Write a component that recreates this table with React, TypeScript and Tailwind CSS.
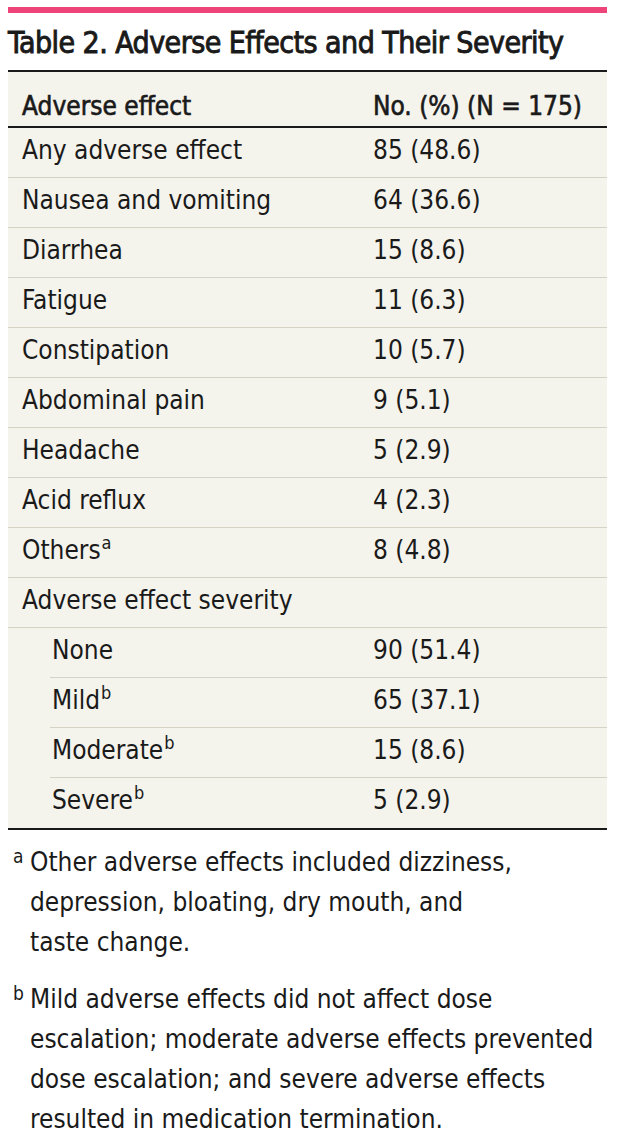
import React from "react";

const font = { fontFamily: '"DejaVu Sans Condensed", "DejaVu Sans", sans-serif' };

type Row = { label: string; sup?: string; value: string; indent?: boolean; noBorder?: boolean };

const rows: Row[] = [
  { label: "Any adverse effect", value: "85 (48.6)" },
  { label: "Nausea and vomiting", value: "64 (36.6)" },
  { label: "Diarrhea", value: "15 (8.6)" },
  { label: "Fatigue", value: "11 (6.3)" },
  { label: "Constipation", value: "10 (5.7)" },
  { label: "Abdominal pain", value: "9 (5.1)" },
  { label: "Headache", value: "5 (2.9)" },
  { label: "Acid reflux", value: "4 (2.3)" },
  { label: "Others", sup: "a", value: "8 (4.8)" },
  { label: "Adverse effect severity", value: "" },
  { label: "None", value: "90 (51.4)", indent: true },
  { label: "Mild", sup: "b", value: "65 (37.1)", indent: true },
  { label: "Moderate", sup: "b", value: "15 (8.6)", indent: true },
  { label: "Severe", sup: "b", value: "5 (2.9)", indent: true, noBorder: true },
];

export default function App() {
  return (
    <div className="w-[617px] min-h-[1142px] bg-white text-[#1a1a1a]" style={font}>
      <div className="pt-[7px] px-[8px] w-[607px]">
        <div className="h-[6px] w-[599px] bg-[#ef4479]" />
        <div className="h-[57px] pt-[12px] text-[30px] leading-[36px] whitespace-nowrap tracking-[-0.55px] [-webkit-text-stroke:0.9px_#1a1a1a]">
          Table 2. Adverse Effects and Their Severity
        </div>
        <div className="w-[599px] border-t-2 border-b-2 border-[#1a1a1a] bg-[#f4f3ec]">
          <div className="flex h-[56px] border-b-2 border-[#1a1a1a] pt-[19px] text-[26px] leading-[30px] [-webkit-text-stroke:0.6px_#1a1a1a]">
            <div className="w-[365px] pl-[14px]">Adverse effect</div>
            <div>No. (%) (N = 175)</div>
          </div>
          {rows.map((r, i) => (
            <div
              key={i}
              className={
                "flex h-[50px] pt-[7px] text-[26px] leading-[30px] " +
                (r.noBorder ? "" : "border-b border-[#d6d3c6] ") +
                (r.indent ? "ml-[42px]" : "")
              }
            >
              <div className={r.indent ? "w-[323px] pl-[2px]" : "w-[365px] pl-[14px]"}>
                {r.label}
                {r.sup && <sup className="text-[18px] relative -top-[10px] ml-[1px]">{r.sup}</sup>}
              </div>
              <div>{r.value}</div>
            </div>
          ))}
        </div>
        <div className="mt-[12px] text-[26px] leading-[40px]">
          <div className="flex">
            <span className="w-[22px] pl-[5px] text-[19px] leading-[28px]">a</span>
            <span>
              Other adverse effects included dizziness,
              <br />
              depression, bloating, dry mouth, and
              <br />
              taste change.
            </span>
          </div>
          <div className="flex mt-[17px]">
            <span className="w-[22px] pl-[5px] text-[19px] leading-[28px]">b</span>
            <span>
              Mild adverse effects did not affect dose
              <br />
              escalation; moderate adverse effects prevented
              <br />
              dose escalation; and severe adverse effects
              <br />
              resulted in medication termination.
            </span>
          </div>
        </div>
      </div>
    </div>
  );
}
